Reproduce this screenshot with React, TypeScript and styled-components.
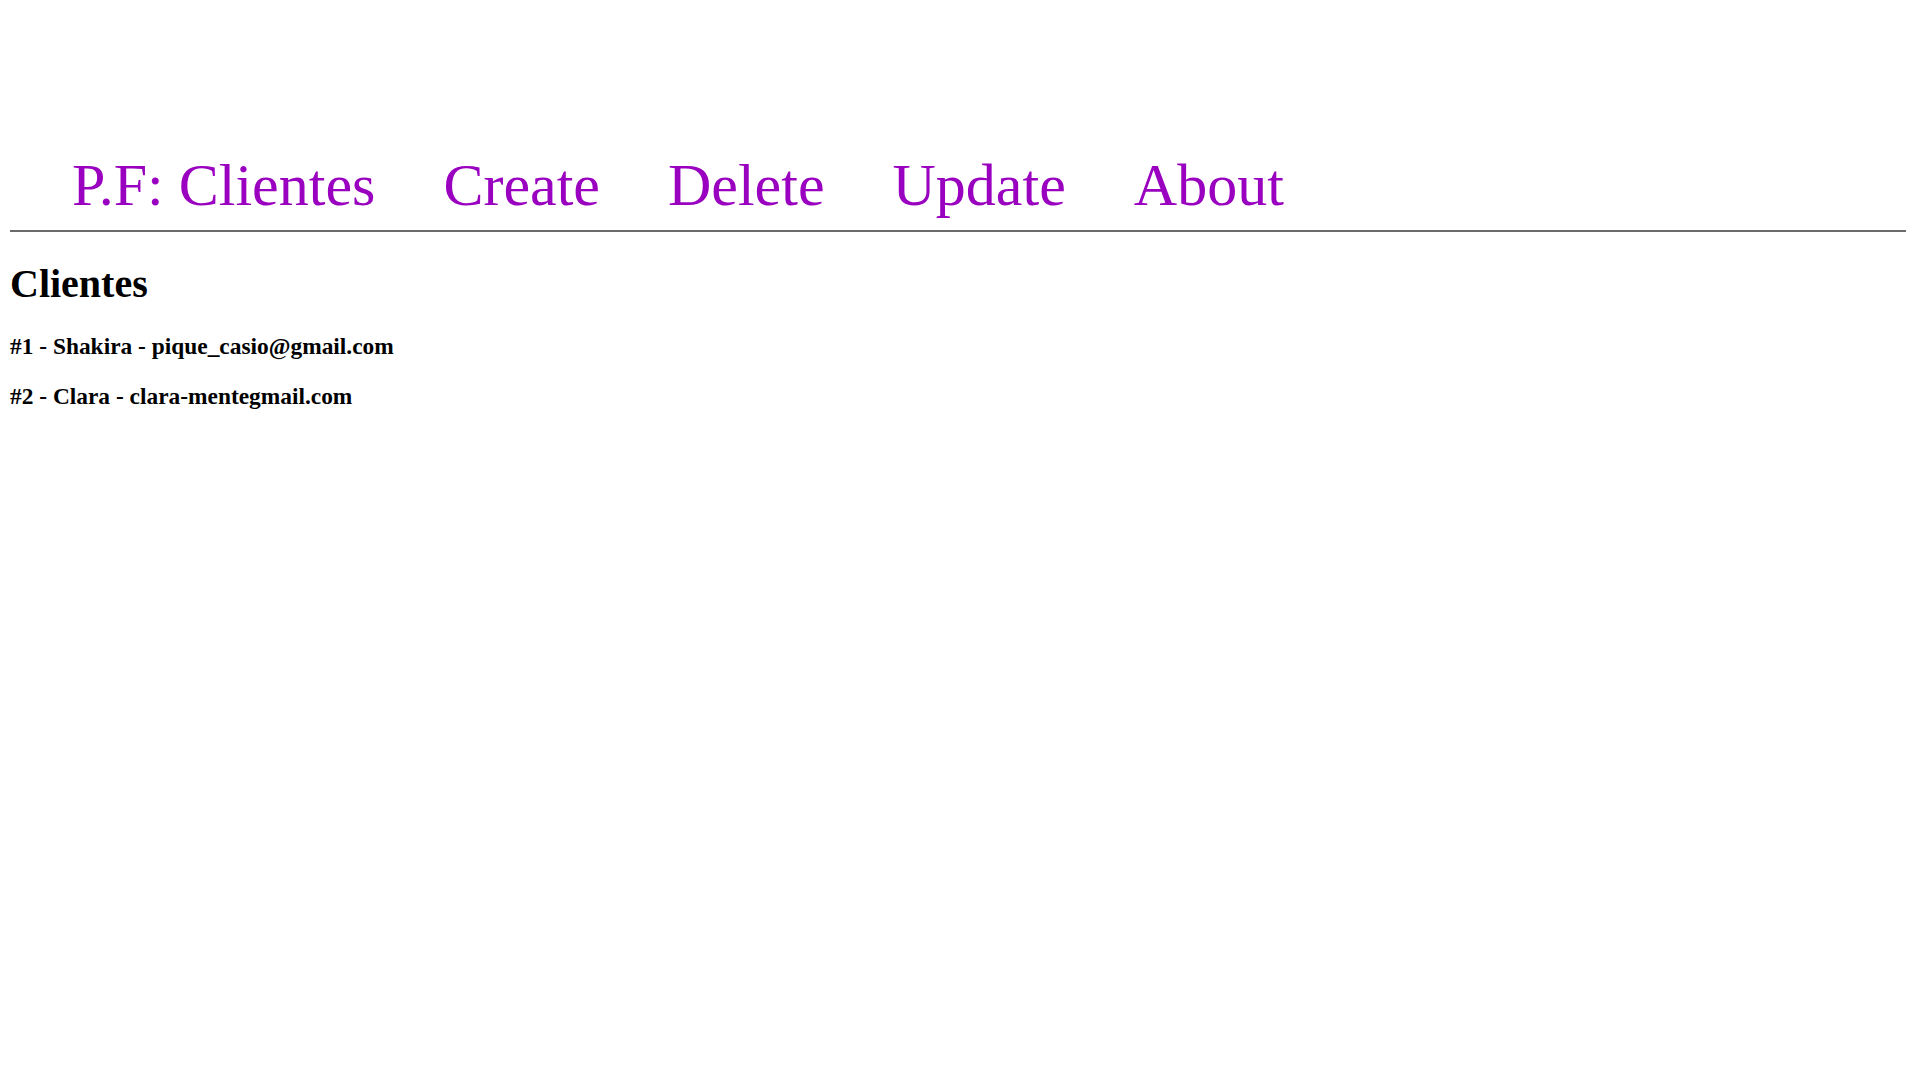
import React from "react";
import styled, { createGlobalStyle } from "styled-components";

const Global = createGlobalStyle`
  html, body { margin: 0; padding: 0; background: #ffffff; }
  body { font-family: "Liberation Serif", "Times New Roman", serif; color: #000; }
`;

const Page = styled.div`
  display: flex;
  flex-direction: column;
  padding: 151px 14px 0 10px;
`;

const Nav = styled.nav`
  border-bottom: 2px solid #6a6a6a;
  padding-bottom: 11px;
`;

const NavList = styled.ul`
  list-style: none;
  margin: 0;
  padding: 0 0 0 62px;
  display: flex;
  gap: 68px;
`;

const NavLink = styled.a`
  font-family: "Liberation Serif", "Times New Roman", serif;
  font-size: 60px;
  line-height: 68px;
  color: #9a00bf;
  text-decoration: none;
  cursor: pointer;
`;

const Title = styled.h1`
  margin: 29px 0 0 0;
  font-size: 40px;
  line-height: 46px;
  font-weight: bold;
`;

const ClientList = styled.div`
  display: flex;
  flex-direction: column;
  gap: 23px;
  margin-top: 26px;
`;

const ClientRow = styled.h3`
  margin: 0;
  font-size: 23.4px;
  line-height: 27px;
  font-weight: bold;
`;

const links = ["P.F: Clientes", "Create", "Delete", "Update", "About"];
const clients = [
  { id: 1, name: "Shakira", email: "pique_casio@gmail.com" },
  { id: 2, name: "Clara", email: "clara-mentegmail.com" },
];

export default function App() {
  return (
    <>
      <Global />
      <Page>
        <Nav>
          <NavList>
            {links.map((l) => (
              <li key={l}>
                <NavLink>{l}</NavLink>
              </li>
            ))}
          </NavList>
        </Nav>
        <Title>Clientes</Title>
        <ClientList>
          {clients.map((c) => (
            <ClientRow key={c.id}>
              #{c.id} - {c.name} - {c.email}
            </ClientRow>
          ))}
        </ClientList>
      </Page>
    </>
  );
}
